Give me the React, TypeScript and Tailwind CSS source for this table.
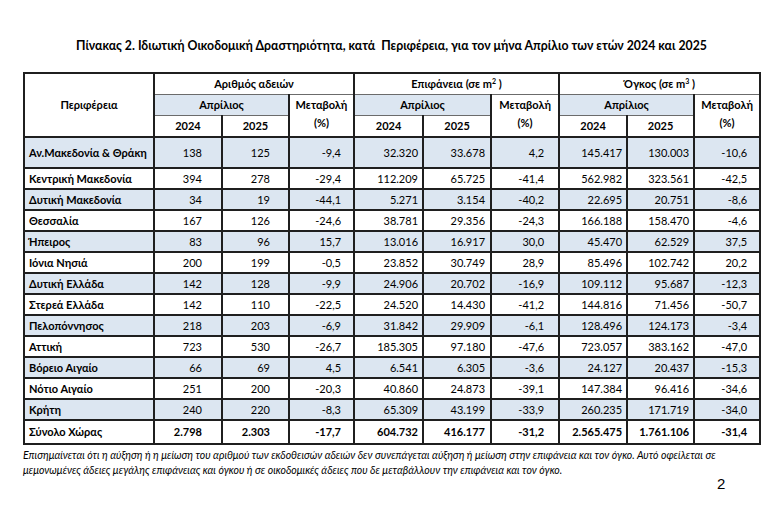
import React from "react";

type Row = {
    name: string;
    vals: string[];
    blue?: boolean;
    total?: boolean;
};

const rows: Row[] = [
    {name: "Αν.Μακεδονία & Θράκη", vals: ["138", "125", "-9,4", "32.320", "33.678", "4,2", "145.417", "130.003", "-10,6"], blue: true},
    {name: "Κεντρική Μακεδονία", vals: ["394", "278", "-29,4", "112.209", "65.725", "-41,4", "562.982", "323.561", "-42,5"]},
    {name: "Δυτική Μακεδονία", vals: ["34", "19", "-44,1", "5.271", "3.154", "-40,2", "22.695", "20.751", "-8,6"], blue: true},
    {name: "Θεσσαλία", vals: ["167", "126", "-24,6", "38.781", "29.356", "-24,3", "166.188", "158.470", "-4,6"]},
    {name: "Ήπειρος", vals: ["83", "96", "15,7", "13.016", "16.917", "30,0", "45.470", "62.529", "37,5"], blue: true},
    {name: "Ιόνια Νησιά", vals: ["200", "199", "-0,5", "23.852", "30.749", "28,9", "85.496", "102.742", "20,2"]},
    {name: "Δυτική Ελλάδα", vals: ["142", "128", "-9,9", "24.906", "20.702", "-16,9", "109.112", "95.687", "-12,3"], blue: true},
    {name: "Στερεά Ελλάδα", vals: ["142", "110", "-22,5", "24.520", "14.430", "-41,2", "144.816", "71.456", "-50,7"]},
    {name: "Πελοπόννησος", vals: ["218", "203", "-6,9", "31.842", "29.909", "-6,1", "128.496", "124.173", "-3,4"], blue: true},
    {name: "Αττική", vals: ["723", "530", "-26,7", "185.305", "97.180", "-47,6", "723.057", "383.162", "-47,0"]},
    {name: "Βόρειο Αιγαίο", vals: ["66", "69", "4,5", "6.541", "6.305", "-3,6", "24.127", "20.437", "-15,3"], blue: true},
    {name: "Νότιο Αιγαίο", vals: ["251", "200", "-20,3", "40.860", "24.873", "-39,1", "147.384", "96.416", "-34,6"]},
    {name: "Κρήτη", vals: ["240", "220", "-8,3", "65.309", "43.199", "-33,9", "260.235", "171.719", "-34,0"], blue: true},
    {name: "Σύνολο Χώρας", vals: ["2.798", "2.303", "-17,7", "604.732", "416.177", "-31,2", "2.565.475", "1.761.106", "-31,4"], total: true},
];

// right padding per numeric column, as measured
const pads = ["pr-[19px]", "pr-[18px]", "pr-[12px]", "pr-[4px]", "pr-[5px]", "pr-[14px]", "pr-[4px]", "pr-[4px]", "pr-[12px]"];

const cell = "border-2 border-[#1f1f1f]";
const blue = "bg-[#dce6f1]";

function GroupHead({children}: { children: React.ReactNode }) {
    return <th colSpan={3} className={cell + " border-b border-b-[#6b6b6b] font-bold"}>{children}</th>;
}

export default function App() {
    return <div className="w-[775px] h-[510px] bg-white text-black relative"
                style={{fontFamily: "Lato, 'Open Sans', sans-serif"}}>
        <h1 className="pt-[38px] text-center text-[12.3px] font-bold leading-4 pl-[8px]">
            Πίνακας 2. Ιδιωτική Οικοδομική Δραστηριότητα, κατά&nbsp; Περιφέρεια, για τον μήνα Απρίλιο των ετών 2024 και 2025
        </h1>
        <div className="px-[23px] pt-[18px]">
            <table className="table-fixed border-collapse w-[736px] text-[11px] leading-[14px] border-2 border-[#1f1f1f]">
                <colgroup>
                    <col className="w-[130px]"/>
                    <col className="w-[68px]"/>
                    <col className="w-[67px]"/>
                    <col className="w-[65px]"/>
                    <col className="w-[69px]"/>
                    <col className="w-[68px]"/>
                    <col className="w-[68px]"/>
                    <col className="w-[68px]"/>
                    <col className="w-[67px]"/>
                    <col className="w-[66px]"/>
                </colgroup>
                <thead>
                <tr className="h-[21px]">
                    <th rowSpan={3} className={cell + " border-b-2 font-bold"}>Περιφέρεια</th>
                    <GroupHead>Αριθμός αδειών</GroupHead>
                    <GroupHead>Επιφάνεια (σε m<sup className="text-[7px]">2</sup> )</GroupHead>
                    <GroupHead>Όγκος (σε m<sup className="text-[7px]">3</sup> )</GroupHead>
                </tr>
                <tr className="h-[21px]">
                    {[0, 1, 2].map(i => <React.Fragment key={i}>
                        <th colSpan={2}
                            className={cell + " " + blue + " border-t border-t-[#6b6b6b] border-b border-b-[#6b6b6b] font-bold"}>
                            Απρίλιος
                        </th>
                        <th rowSpan={2}
                            className={cell + " border-t border-t-[#6b6b6b] font-bold leading-[18px] align-top pt-[1px]"}>
                            Μεταβολή<br/>(%)
                        </th>
                    </React.Fragment>)}
                </tr>
                <tr className="h-[22px]">
                    {[0, 1, 2].map(i => <React.Fragment key={i}>
                        <th className={cell + " border-t border-t-[#6b6b6b] font-bold"}>2024</th>
                        <th className={cell + " border-t border-t-[#6b6b6b] font-bold"}>2025</th>
                    </React.Fragment>)}
                </tr>
                </thead>
                <tbody>
                {rows.map((r, i) => <tr key={r.name}
                                        className={(i === 0 ? "h-[31px] " : r.total ? "h-[24px] " : "h-[21px] ") + (r.blue ? blue : "bg-white")}>
                    <td className={cell + " pl-[4px] font-bold text-left whitespace-nowrap"}>{r.name}</td>
                    {r.vals.map((v, j) => <td key={j}
                                              className={cell + " text-right " + pads[j] + (r.total ? " font-bold" : "")}>{v}</td>)}
                </tr>)}
                </tbody>
            </table>
        </div>
        <p className="px-[23px] pt-[3px] text-[10.5px] italic leading-[15px] whitespace-nowrap">
            Επισημαίνεται ότι η αύξηση ή η μείωση του αριθμού των εκδοθεισών αδειών δεν συνεπάγεται αύξηση ή μείωση στην επιφάνεια και τον όγκο. Αυτό οφείλεται σε
            <br/>
            μεμονωμένες άδειες μεγάλης επιφάνειας και όγκου ή σε οικοδομικές άδειες που δε μεταβάλλουν την επιφάνεια και τον όγκο.
        </p>
        <div className="absolute left-[717px] top-[475px] text-[15px] leading-[18px]"
             style={{fontFamily: "'Liberation Sans', Arial, sans-serif"}}>2
        </div>
    </div>;
}
